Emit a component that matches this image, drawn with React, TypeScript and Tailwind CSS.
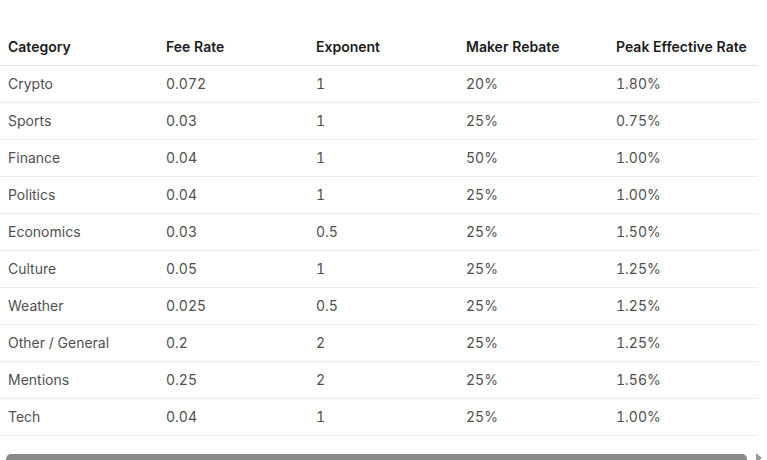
const rows = [
  { category: "Crypto", fee: "0.072", exp: "1", rebate: "20%", peak: "1.80%" },
  { category: "Sports", fee: "0.03", exp: "1", rebate: "25%", peak: "0.75%" },
  { category: "Finance", fee: "0.04", exp: "1", rebate: "50%", peak: "1.00%" },
  { category: "Politics", fee: "0.04", exp: "1", rebate: "25%", peak: "1.00%" },
  { category: "Economics", fee: "0.03", exp: "0.5", rebate: "25%", peak: "1.50%" },
  { category: "Culture", fee: "0.05", exp: "1", rebate: "25%", peak: "1.25%" },
  { category: "Weather", fee: "0.025", exp: "0.5", rebate: "25%", peak: "1.25%" },
  { category: "Other / General", fee: "0.2", exp: "2", rebate: "25%", peak: "1.25%" },
  { category: "Mentions", fee: "0.25", exp: "2", rebate: "25%", peak: "1.56%" },
  { category: "Tech", fee: "0.04", exp: "1", rebate: "25%", peak: "1.00%" },
];

const headers = ["Category", "Fee Rate", "Exponent", "Maker Rebate", "Peak Effective Rate"];

const App = () => {
  return (
    <div className="w-[767px] h-[460px] overflow-hidden bg-white font-['Inter',sans-serif]">
      <div className="pt-[29px]">
        <table className="table-fixed w-[758px] border-collapse text-[14px] tabular-nums">
          <colgroup>
            <col className="w-[158px]" />
            <col className="w-[150px]" />
            <col className="w-[150px]" />
            <col className="w-[150px]" />
            <col className="w-[150px]" />
          </colgroup>
          <thead>
            <tr className="border-b border-[#e3e3e3]">
              {headers.map((h) => (
                <th
                  key={h}
                  className="h-[36px] px-2 text-left font-semibold text-[#1c1c1c] whitespace-nowrap"
                >
                  {h}
                </th>
              ))}
            </tr>
          </thead>
          <tbody>
            {rows.map((r) => (
              <tr key={r.category} className="border-b border-[#ececec]">
                <td className="h-[37px] px-2 text-[#505050]">{r.category}</td>
                <td className="h-[37px] px-2 text-[#505050]">{r.fee}</td>
                <td className="h-[37px] px-2 text-[#505050]">{r.exp}</td>
                <td className="h-[37px] px-2 text-[#505050]">{r.rebate}</td>
                <td className="h-[37px] px-2 text-[#505050]">{r.peak}</td>
              </tr>
            ))}
          </tbody>
        </table>
      </div>

      {/* fake horizontal scrollbar */}
      <div className="mt-[18px] flex items-start h-[10px]">
        <div className="ml-[6px] w-[741px] h-[10px] rounded-full bg-[#8a8a8a]" />
        <svg className="ml-[9px] mt-[-1px]" width="6" height="10" viewBox="0 0 6 10">
          <path d="M0 0 L6 5 L0 10 Z" fill="#9a9a9a" />
        </svg>
      </div>
    </div>
  );
};

export default App;
